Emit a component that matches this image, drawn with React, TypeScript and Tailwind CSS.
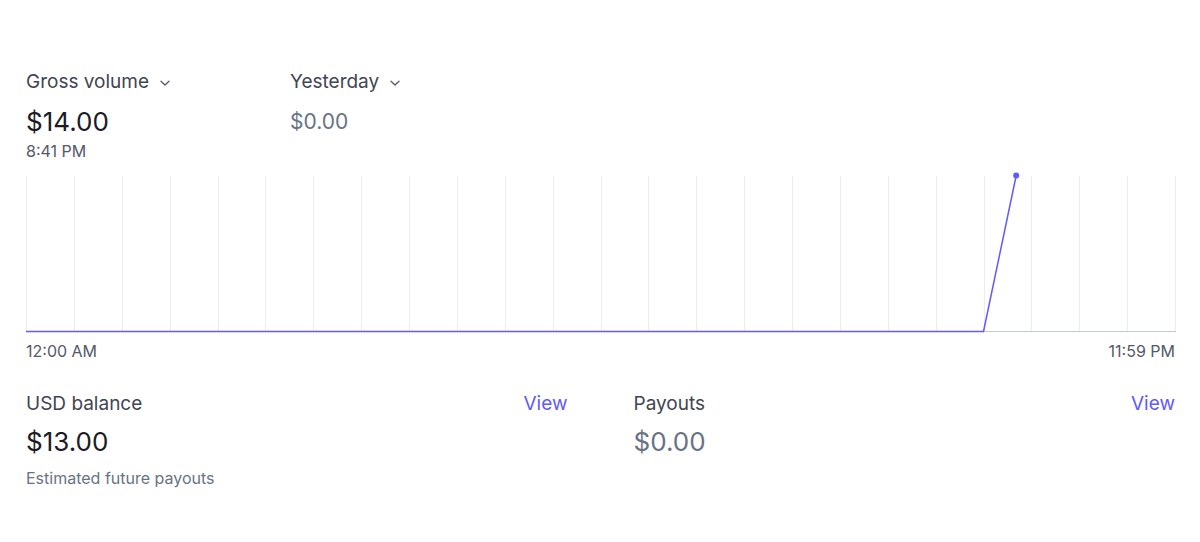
import React from "react";

const Chevron = () => (
  <svg width="12" height="12" viewBox="0 0 12 12" className="ml-[10px] mt-[1px]">
    <path d="M2 4.2 L6 8 L10 4.2" fill="none" stroke="#545969" strokeWidth="1.3" strokeLinecap="round" strokeLinejoin="round" />
  </svg>
);

const Chart = () => {
  const step = 1149 / 24;
  const top = 4;
  const base = 159.5;
  const lines = Array.from({ length: 25 }, (_, i) => Math.round(i * step) + 0.5);
  const xStart = 20 * step;
  const xDot = 20.683 * step;
  return (
    <svg width="1150" height="164" className="block">
      {lines.map((x, i) => (
        <line key={i} x1={x} y1={top} x2={x} y2={base} stroke="#ebeef1" strokeWidth="1" />
      ))}
      <line x1={xStart} y1={base} x2={1150} y2={base} stroke="#c0c8d2" strokeWidth="1" />
      <line x1={0} y1={base} x2={xStart} y2={base} stroke="#625afa" strokeWidth="1.5" />
      <line x1={xStart} y1={base} x2={xDot} y2={3.5} stroke="#625afa" strokeWidth="1.5" strokeLinecap="round" />
      <circle cx={xDot} cy={3.5} r="3" fill="#625afa" />
    </svg>
  );
};

export default function App() {
  return (
    <div
      className="w-[1200px] h-[542px] bg-white pl-[26px] pr-[25px] pt-[70px]"
      style={{ fontFamily: "Inter, 'Noto Sans', sans-serif" }}
    >
      <div className="flex">
        <div className="w-[264px]">
          <div className="flex items-center h-[24px] text-[19px] leading-[24px] text-[#414552]">
            Gross volume
            <Chevron />
          </div>
          <div className="mt-[12px] text-[26px] leading-[32px] text-[#1a1b25]">$14.00</div>
          <div className="mt-[3px] text-[16px] leading-[20px] text-[#545969]">8:41 PM</div>
        </div>
        <div>
          <div className="flex items-center h-[24px] text-[19px] leading-[24px] text-[#414552]">
            Yesterday
            <Chevron />
          </div>
          <div className="mt-[12px] h-[32px] flex items-end pb-[3px] text-[21px] leading-[26px] text-[#687385]">$0.00</div>
        </div>
      </div>

      <div className="mt-[11px]">
        <Chart />
      </div>

      <div className="mt-[5px] flex justify-between text-[16px] leading-[20px] text-[#545969]">
        <span>12:00 AM</span>
        <span>11:59 PM</span>
      </div>

      <div className="mt-[31px] grid grid-cols-2 gap-x-[66px]">
        <div>
          <div className="flex justify-between items-center text-[19px] leading-[24px]">
            <span className="text-[#414552]">USD balance</span>
            <span className="text-[#625afa]">View</span>
          </div>
          <div className="mt-[10px] text-[26px] leading-[32px] text-[#1a1b25]">$13.00</div>
          <div className="mt-[10px] text-[16px] leading-[20px] text-[#687385]">Estimated future payouts</div>
        </div>
        <div>
          <div className="flex justify-between items-center text-[19px] leading-[24px]">
            <span className="text-[#414552]">Payouts</span>
            <span className="text-[#625afa]">View</span>
          </div>
          <div className="mt-[10px] text-[26px] leading-[32px] text-[#687385]">$0.00</div>
        </div>
      </div>
    </div>
  );
}
